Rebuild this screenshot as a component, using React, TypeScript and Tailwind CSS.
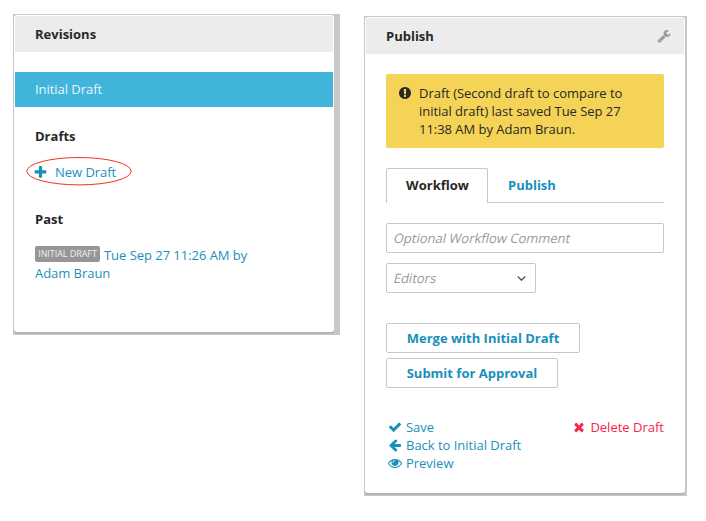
import type { ReactNode } from 'react';

const ICONS = {
  plus: 'M1600 736v192q0 40-28 68t-68 28h-416v416q0 40-28 68t-68 28h-192q-40 0-68-28t-28-68v-416h-416q-40 0-68-28t-28-68v-192q0-40 28-68t68-28h416v-416q0-40 28-68t68-28h192q40 0 68 28t28 68v416h416q40 0 68 28t28 68z',
  check: 'M1671 566q0 40-28 68l-724 724-136 136q-28 28-68 28t-68-28l-136-136-362-362q-28-28-28-68t28-68l136-136q28-28 68-28t68 28l294 295 656-657q28-28 68-28t68 28l136 136q28 28 28 68z',
  times: 'M1490 1322q0 40-28 68l-136 136q-28 28-68 28t-68-28l-294-294-294 294q-28 28-68 28t-68-28l-136-136q-28-28-28-68t28-68l294-294-294-294q-28-28-28-68t28-68l136-136q28-28 68-28t68 28l294 294 294-294q28-28 68-28t68 28l136 136q28 28 28 68t-28 68l-294 294 294 294q28 28 28 68z',
  back: 'M1664 896v128q0 53-32.5 90.5t-84.5 37.5h-704l293 294q38 36 38 90t-38 90l-75 76q-37 37-90 37-52 0-91-37l-651-652q-37-37-37-90 0-52 37-91l651-650q38-38 91-38 52 0 90 38l75 74q38 38 38 91t-38 91l-293 293h704q52 0 84.5 37.5t32.5 90.5z',
  eye: 'M1664 960q-152-236-381-353 61 104 61 225 0 185-131.5 316.5t-316.5 131.5-316.5-131.5-131.5-316.5q0-121 61-225-229 117-381 353 133 205 333.5 326.5t434.5 121.5 434.5-121.5 333.5-326.5zm-720-384q0-20-14-34t-34-14q-125 0-214.5 89.5t-89.5 214.5q0 20 14 34t34 14 34-14 14-34q0-86 61-147t147-61q20 0 34-14t14-34zm848 384q0 34-20 69-140 230-376.5 368.5t-499.5 138.5-499.5-139-376.5-368q-20-35-20-69t20-69q140-229 376.5-368t499.5-139 499.5 139 376.5 368q20 35 20 69z',
  wrench: 'M448 1472q0-26-19-45t-45-19-45 19-19 45 19 45 45 19 45-19 19-45zm644-420l-682 682q-37 37-90 37-52 0-91-37l-106-108q-38-36-38-90 0-53 38-91l681-681q39 98 114.5 173.5t173.5 114.5zm634-435q0 39-23 106-47 134-164.5 217.5t-258.5 83.5q-185 0-316.5-131.5t-131.5-316.5 131.5-316.5 316.5-131.5q58 0 121.5 16.5t107.5 46.5q16 11 16 28t-16 28l-293 169v224l193 107q5-3 79-48.5t135.5-81 70.5-35.5q15 0 23.5 10t8.5 25z',
  alert: 'M896 128q209 0 385.5 103t279.5 279.5 103 385.5-103 385.5-279.5 279.5-385.5 103-385.5-103-279.5-279.5-103-385.5 103-385.5 279.5-279.5 385.5-103zm128 1247v-190q0-14-9-23.5t-22-9.5h-192q-13 0-23 10t-10 23v190q0 13 10 23t23 10h192q13 0 22-9.5t9-23.5zm-2-344l18-621q0-12-10-18-10-8-24-8h-220q-14 0-24 8-10 6-10 18l17 621q0 10 10 17.5t24 7.5h185q14 0 23.5-7.5t10.5-17.5z',
};

function Icon({ name, className }: { name: keyof typeof ICONS; className: string }) {
  return (
    <svg viewBox="0 0 1792 1792" fill="currentColor" className={`shrink-0 ${className}`}>
      <path d={ICONS[name]} />
    </svg>
  );
}

function PanelHeader({ title, children }: { title: string; children?: ReactNode }) {
  return (
    <header className="flex h-9 items-center justify-between rounded-t-xs bg-[#ececec] pl-5 pr-[13px] font-bold">
      <h2>{title}</h2>
      {children}
    </header>
  );
}

function RevisionsPanel() {
  return (
    <div className="mt-3.5 h-[321px] w-[327px] bg-[#c8c8c8] pl-px pr-1.5 pt-px">
      <section className="h-[317px] rounded-[3px] bg-white px-px pt-px shadow-[0_2px_0_#b4b4b4]">
        <PanelHeader title="Revisions" />
        <div className="mt-5 flex h-[35px] items-center bg-[#40b4da] pb-px pl-5 text-[#eaf7fc]">
          <span className="tracking-[-0.04px]">Initial Draft</span>
        </div>
        <div className="px-5 pt-5">
          <h3 className="font-bold">Drafts</h3>
          <a className="relative mt-[18px] flex w-max items-center text-[#1990ba]">
            <Icon name="plus" className="-ml-0.5 mr-[7px] size-[15px]" />
            <span className="tracking-[-0.04px]">New Draft</span>
            <svg className="absolute -left-[9px] -top-[7px] h-[30px] w-[106px]" viewBox="0 0 106 30" fill="none">
              <ellipse cx="53" cy="15.2" rx="52.2" ry="13.7" stroke="#f5321e" />
            </svg>
          </a>
          <h3 className="mt-[29px] font-bold">Past</h3>
          <div className="mt-[18px] text-[#1990ba]">
            <div className="flex h-[18px] items-start">
              <span className="h-4 w-[65px] rounded-xs bg-[#969696] text-center text-[9px] leading-4 tracking-[-0.06px] text-[#f0f0f0]">
                INITIAL DRAFT
              </span>
              <span className="ml-1 tracking-[-0.04px]">Tue Sep 27 11:26 AM by</span>
            </div>
            <p className="tracking-[-0.04px]">Adam Braun</p>
          </div>
        </div>
      </section>
    </div>
  );
}

function ActionLink({ icon, label }: { icon: keyof typeof ICONS; label: string }) {
  return (
    <a className="flex items-center gap-1">
      <Icon name={icon} className="size-3.5" />
      {label}
    </a>
  );
}

function PublishPanel() {
  return (
    <div className="ml-6 mt-4 h-[480px] w-[323px] bg-[#c8c8c8] pl-px pr-0.5 pt-px">
      <section className="h-[476px] rounded-[3px] bg-white px-px pt-px shadow-[0_2px_0_#b4b4b4]">
        <PanelHeader title="Publish">
          <Icon name="wrench" className="size-3.5 text-[#999]" />
        </PanelHeader>
        <div className="px-5 pt-5">
          <div className="flex rounded-xs bg-[#f5d356] py-2.5 pl-3">
            <Icon name="alert" className="mr-[7px] mt-0.5 size-3.5" />
            <p className="w-[215px] tracking-[-0.03px]">Draft (Second draft to compare to initial draft) last saved Tue Sep 27 11:38 AM by Adam Braun.</p>
          </div>
          <nav className="mt-5 flex h-[35px] font-bold">
            <a className="flex w-[102px] items-center justify-center rounded-t-xs border border-b-0 border-[#c8c8c8] pb-0.5 pl-px">Workflow</a>
            <a className="flex grow items-center border-b border-[#c8c8c8] pl-5 text-[#1990ba]">Publish</a>
          </nav>
          <div className="mt-5 flex h-[30px] items-center rounded-xs border border-[#c8c8c8] px-[7px] text-[#999]">
            <span className="-skew-x-12">Optional Workflow Comment</span>
          </div>
          <div className="mt-2.5 flex h-[30px] w-[150px] items-center justify-between rounded-xs border border-[#c8c8c8] pl-[7px] pr-[9px] text-[#999]">
            <span className="-skew-x-12">Editors</span>
            <svg className="h-[5px] w-[9px]" viewBox="0 0 9 5" fill="none" stroke="#555" strokeWidth="1.4">
              <path d="M.8.5 4.5 4.2 8.2.5" />
            </svg>
          </div>
          <div className="mt-[30px] flex flex-col items-start gap-[5px] font-bold text-[#1990ba]">
            <button className="h-[30px] w-[194px] rounded-xs border border-[#c8c8c8]">Merge with Initial Draft</button>
            <button className="h-[30px] w-[172px] rounded-xs border border-[#c8c8c8]">Submit for Approval</button>
          </div>
          <div className="mt-[30px] flex items-start justify-between">
            <div className="pl-0.5 tracking-[-0.02px] text-[#1990ba]">
              <ActionLink icon="check" label="Save" />
              <ActionLink icon="back" label="Back to Initial Draft" />
              <ActionLink icon="eye" label="Preview" />
            </div>
            <div className="text-[#f8264b]">
              <ActionLink icon="times" label="Delete Draft" />
            </div>
          </div>
        </div>
      </section>
    </div>
  );
}

export default function App() {
  return (
    <main className="flex h-[521px] w-[706px] items-start bg-white pl-[13px] font-['Open_Sans',sans-serif] text-[13px] leading-[18px] text-[#282828]">
      <RevisionsPanel />
      <PublishPanel />
    </main>
  );
}
